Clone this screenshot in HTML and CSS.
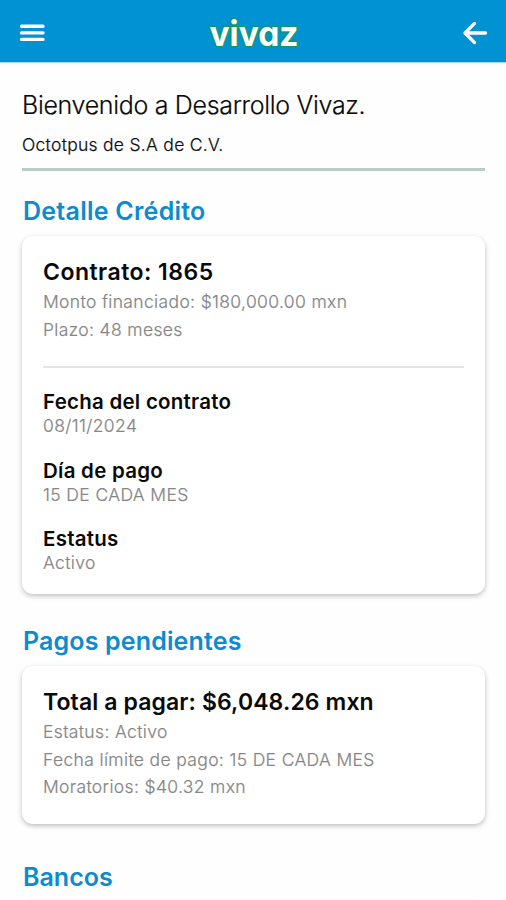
FILE: index.html
```html
<!DOCTYPE html>
<html lang="es">
<head>
<meta charset="utf-8">
<title>Vivaz</title>
<link rel="stylesheet" href="styles.css">
</head>
<body>
<header class="bar">
  <svg class="menu" width="26" height="18" viewBox="0 0 26 18"><path d="M2.5 2.2H24M2.5 8.9H24M2.5 15.4H24" fill="none" stroke="#fff" stroke-width="3.4" stroke-linecap="round"/></svg>
  <svg class="logo" width="96" height="40" viewBox="0 0 96 40"><text x="3.5" y="34" textLength="89" lengthAdjust="spacingAndGlyphs">vivaz</text></svg>
  <svg class="back" width="26" height="24" viewBox="0 0 26 24"><path d="M23.5 12H3M12.5 2.4L3 12L12.5 21.6" fill="none" stroke="#fff" stroke-width="3.3" stroke-linecap="round" stroke-linejoin="round"/></svg>
</header>
<main class="content">
  <h1 class="welcome">Bienvenido a Desarrollo Vivaz.</h1>
  <p class="company">Octotpus de S.A de C.V.</p>
  <hr class="rule">
  <h2 class="section credit">Detalle Crédito</h2>
  <section class="card contract">
    <h3 class="headline">Contrato: 1865</h3>
    <p class="line">Monto financiado: $180,000.00 mxn</p>
    <p class="line">Plazo: 48 meses</p>
    <hr class="divider">
    <dl class="facts">
      <div><dt>Fecha del contrato</dt><dd>08/11/2024</dd></div>
      <div><dt>Día de pago</dt><dd>15 DE CADA MES</dd></div>
      <div><dt>Estatus</dt><dd>Activo</dd></div>
    </dl>
  </section>
  <h2 class="section payments">Pagos pendientes</h2>
  <section class="card pending">
    <h3 class="headline">Total a pagar: $6,048.26 mxn</h3>
    <p class="line">Estatus: Activo</p>
    <p class="line">Fecha límite de pago: 15 DE CADA MES</p>
    <p class="line">Moratorios: $40.32 mxn</p>
  </section>
  <h2 class="section banks">Bancos</h2>
  <section class="card bank-list"></section>
</main>
</body>
</html>
```
FILE: styles.css
```css
* { box-sizing: border-box; margin: 0; padding: 0; }
html, body { height: 900px; overflow: hidden; }
body { background: #fefefe; color: #0a0a0a; font-family: Inter, "Liberation Sans", sans-serif; }
.bar { height: 62px; padding: 0 18px 0 19px; display: flex; align-items: center; justify-content: space-between; background: #0092d2; box-shadow: 0 1px 0 #a9d8ef; }
.menu { margin-top: 4px; }
.back { margin-top: 4px; }
.logo { margin: 2px 0 0 1px; overflow: visible; }
.logo text { font-family: Inter, sans-serif; font-size: 35px; font-weight: 700; font-feature-settings: "cv11"; fill: #fff; stroke: #0b9a62; stroke-width: 2.6px; stroke-linejoin: round; paint-order: stroke; }
.content { height: 838px; overflow: hidden; padding: 27px 21px 0 22px; }
.welcome, .company, .line, .facts dd { font-weight: 300; -webkit-text-stroke: .2px currentColor; }
.welcome { font-size: 25px; line-height: 32px; letter-spacing: -.32px; }
.company { margin-top: 10px; font-size: 17.5px; line-height: 27px; letter-spacing: .28px; }
.rule { margin-top: 10px; height: 3px; border: 0; background: #b9cdc8; }
.section { margin-top: 24px; font-size: 25px; line-height: 32px; font-weight: 600; color: #0b8bd0; padding-left: 1px; }
.credit { letter-spacing: .25px; }
.payments { margin-top: 30.5px; letter-spacing: .15px; }
.banks { margin-top: 36.5px; }
.card { margin-top: 9px; padding: 20px 21px 0; border-radius: 11px; background: #fff; box-shadow: 0 2px 5px rgba(0, 0, 0, .25); }
.contract { height: 358px; }
.payments + .card { margin-top: 9.5px; }
.pending { height: 158px; }
.bank-list { height: 158px; }
.headline { font-size: 23px; line-height: 32px; font-weight: 600; }
.contract .headline { letter-spacing: .48px; }
.pending .headline { letter-spacing: .11px; }
.line { font-size: 17.5px; line-height: 27.5px; color: #858585; letter-spacing: .35px; }
.divider { margin-top: 23px; height: 2px; border: 0; background: #e5e5e5; }
.facts { margin-top: 22px; display: grid; gap: 21.5px; }
.facts dt { font-size: 20.5px; line-height: 24px; font-weight: 600; letter-spacing: .25px; }
.facts dd { font-size: 17.5px; line-height: 23px; color: #858585; letter-spacing: .38px; }
```
